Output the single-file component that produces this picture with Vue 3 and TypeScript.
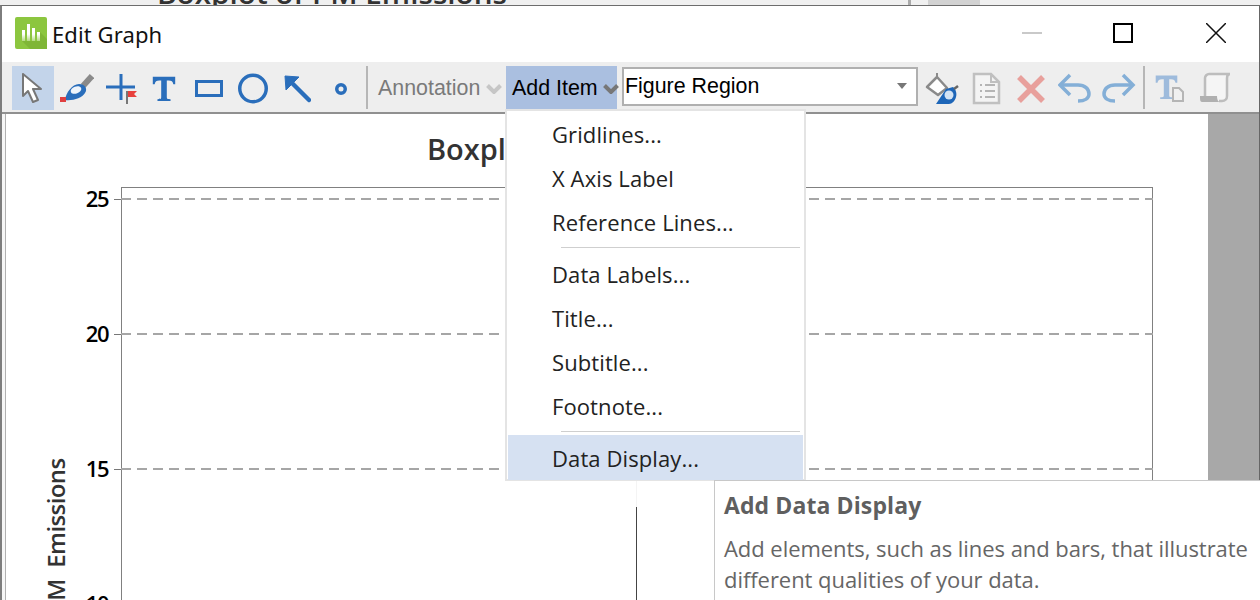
<script setup lang="ts">
const ticks = [
  { label: '25', y: 199 },
  { label: '20', y: 334 },
  { label: '15', y: 469 },
  { label: '10', y: 604 },
]
const groups = [
  ['Gridlines...', 'X Axis Label', 'Reference Lines...'],
  ['Data Labels...', 'Title...', 'Subtitle...', 'Footnote...'],
]
const tPath = 'M3 4H27V12H25C24.500 9 23 8 20 8H18V26C18 28 19 28 22 28V30H8V28C11 28 12 28 12 26V8H10C7 8 5.500 9 5 12H3Z'
</script>

<template>
  <div class="screen">
    <div class="behind">
      <span class="behind-title">Boxplot of PM Emissions</span>
      <i class="behind-tick"></i>
      <i class="behind-thumb"></i>
    </div>
    <div class="window">
      <header class="titlebar">
        <svg class="app-icon" width="32" height="32" viewBox="0 0 32 32">
          <defs>
            <linearGradient id="barFade" x1="0" y1="0" x2="0" y2="1">
              <stop offset="0.6" stop-color="#fff" />
              <stop offset="1" stop-color="#fff" stop-opacity="0.35" />
            </linearGradient>
          </defs>
          <rect width="32" height="32" rx="2" fill="#8cc63f" />
          <path d="M7 24L15 32H32V22L25 15V24z" fill="#7fb636" />
          <path d="M7 13h3v11H7zM12 7h3v17h-3zM17 11h3v13h-3zM22 15h3v9h-3z" fill="url(#barFade)" />
        </svg>
        <span class="title-text">Edit Graph</span>
        <div class="win-controls">
          <svg width="20" height="20" viewBox="0 0 20 20"><path d="M0 10h20" stroke="#c9c9c9" stroke-width="2" /></svg>
          <svg width="20" height="20" viewBox="0 0 20 20"><rect x="1" y="1" width="18" height="18" fill="none" stroke="#000" stroke-width="2" /></svg>
          <svg class="close-x" width="20" height="20" viewBox="0 0 20 20"><path d="M0 0l20 20M20 0L0 20" stroke="#111" stroke-width="1.500" /></svg>
        </div>
      </header>
      <div class="toolbar">
        <button class="tool selected">
          <svg class="soft" width="24" height="32" viewBox="0 0 24 32"><path d="M2 2V24L7 19L12 30L17 28L12 17H20Z" fill="#fff" stroke="#777" stroke-width="2" stroke-linejoin="round" /></svg>
        </button>
        <button class="tool">
          <svg class="soft" width="36" height="32" viewBox="0 0 36 32">
            <path d="M25 14L34 4" stroke="#8a8a8a" stroke-width="6" />
            <path d="M7 28c1-7 7-16 14-16 6 0 9 5 6 9-3 5-12 8-20 7z" fill="#2a6ebb" />
            <ellipse cx="18" cy="18" rx="5.500" ry="3.500" fill="#eef4fb" transform="rotate(-20 18 18)" />
            <rect x="2" y="25" width="6" height="5" fill="#e04040" />
          </svg>
        </button>
        <button class="tool">
          <svg class="soft" width="34" height="32" viewBox="0 0 34 32">
            <path d="M3 15h29M18 2v26" stroke="#2a6ebb" stroke-width="3" fill="none" />
            <path d="M24 19h10l-3 3 3 3h-10z" fill="#e8403c" />
            <path d="M24 19v13" stroke="#777" stroke-width="2" />
          </svg>
        </button>
        <button class="tool">
          <svg class="soft" width="28" height="32" viewBox="0 0 30 32"><path :d="tPath" fill="#2a6ebb" /></svg>
        </button>
        <button class="tool">
          <svg class="soft" width="30" height="32" viewBox="0 0 30 32"><rect x="3.500" y="9.500" width="25" height="14" fill="none" stroke="#2a6ebb" stroke-width="3" /></svg>
        </button>
        <button class="tool">
          <svg class="soft" width="32" height="32" viewBox="0 0 32 32"><circle cx="17" cy="16.500" r="13.250" fill="none" stroke="#2a6ebb" stroke-width="3.500" /></svg>
        </button>
        <button class="tool">
          <svg class="soft" width="30" height="32" viewBox="0 0 30 32"><path d="M8 8L28 28" stroke="#2a6ebb" stroke-width="4.500" stroke-linecap="round" /><path d="M4 4L18 5L5 18Z" fill="#2a6ebb" stroke="#2a6ebb" stroke-linejoin="round" /></svg>
        </button>
        <button class="tool">
          <svg class="soft" width="30" height="32" viewBox="0 0 30 32"><circle cx="16" cy="17" r="4.250" fill="none" stroke="#2a6ebb" stroke-width="3.500" /></svg>
        </button>
        <span class="sep first"></span>
        <div class="menu-label muted">Annotation
          <svg width="16" height="10" viewBox="0 0 16 10"><path d="M1.500 1.500l6.500 6.500 6.500-6.500" fill="none" stroke="#c6c6c6" stroke-width="4" /></svg>
        </div>
        <div class="menu-label active">Add Item
          <svg width="16" height="10" viewBox="0 0 16 10"><path d="M1.500 1.500l6.500 6.500 6.500-6.500" fill="none" stroke="#777" stroke-width="4" /></svg>
        </div>
        <div class="combo">
          <span>Figure Region</span>
          <i class="combo-arrow"></i>
        </div>
        <button class="tool paint">
          <svg class="soft" width="36" height="34" viewBox="0 0 36 34">
            <path d="M4 16L14 6L24 17L15 24Z" fill="#fff" stroke="#8a8a8a" stroke-width="2.500" stroke-linejoin="round" />
            <path d="M14 6V2" stroke="#8a8a8a" stroke-width="2" />
            <path d="M13 33l10-15 7-2c3 2 4 7 3 10-1 4-4 7-7 7z" fill="#1e66b8" />
            <circle cx="26" cy="24" r="4.500" fill="#d3e3f4" />
            <path d="M31 18l4-3" stroke="#666" stroke-width="2.500" />
          </svg>
        </button>
        <button class="tool gap">
          <svg class="soft" width="30" height="34" viewBox="0 0 30 34">
            <path d="M2 3H19L27 11V32H2Z" fill="#f4f4f4" stroke="#c0c0c0" stroke-width="2.500" />
            <path d="M19 3V11H27" fill="none" stroke="#c0c0c0" stroke-width="2" />
            <path d="M8 14h2M13 14h10M8 20h2M13 20h10M8 26h2M13 26h10" stroke="#b5b5b5" stroke-width="2" />
          </svg>
        </button>
        <button class="tool">
          <svg class="soft" width="32" height="34" viewBox="0 0 32 34"><path d="M4 6L28 30M28 6L4 30" stroke="#e8a09c" stroke-width="5.500" /></svg>
        </button>
        <button class="tool">
          <svg class="soft" width="34" height="34" viewBox="0 0 34 34"><path d="M3 14H20C27 14 31 18 31 23C31 27 27 30 20 30" fill="none" stroke="#84afd7" stroke-width="3.500" /><path d="M12 4L2 14L12 24" fill="none" stroke="#84afd7" stroke-width="3.500" /></svg>
        </button>
        <button class="tool">
          <svg class="soft" width="34" height="34" viewBox="0 0 34 34"><path d="M31 14H13C6 14 2 18 2 23C2 27 6 30 13 30" fill="none" stroke="#84afd7" stroke-width="3.500" /><path d="M21 4L31 14L21 24" fill="none" stroke="#84afd7" stroke-width="3.500" /></svg>
        </button>
        <span class="sep second"></span>
        <button class="tool">
          <svg class="soft" width="32" height="34" viewBox="0 0 32 34">
            <path :d="tPath" fill="#9ebbdc" transform="translate(-1 1) scale(0.9)" />
            <path d="M19 17h6l4 4v9H19z" fill="#f0f0f0" stroke="#b5b5b5" stroke-width="2" />
          </svg>
        </button>
        <button class="tool">
          <svg class="soft" width="34" height="34" viewBox="0 0 34 34">
            <path d="M8 26V7c0-2 2-4 4-4H33c-2 0-3 2-3 4V25c0 3-2 5-5 5H22" fill="#f5f5f5" stroke="#bdbdbd" stroke-width="2.500" />
            <path d="M3 25H20c0 3 1 6 3 6H5c-2 0-2-3-2-6z" fill="#b0b0b0" />
          </svg>
        </button>
      </div>
      <main class="workspace">
        <section class="figure">
          <h1 class="chart-title">Boxplot of PM Emissions</h1>
          <div class="plot">
            <div class="mid-faint"></div>
            <div class="mid-line"></div>
          </div>
          <div v-for="t in ticks" :key="t.label" class="tick" :style="{ top: t.y - 115 + 'px' }">
            <span class="tick-label">{{ t.label }}</span>
            <span class="tick-mark"></span>
            <span class="tick-dash"></span>
          </div>
          <div class="y-title">PM Emissions</div>
        </section>
        <aside class="scroll-gutter"></aside>
      </main>
    </div>

    <nav class="dropdown">
      <template v-for="(items, i) in groups" :key="i">
        <div v-for="item in items" :key="item" class="menu-item">{{ item }}</div>
        <div class="menu-rule"></div>
      </template>
      <div class="menu-item hot">Data Display...</div>
    </nav>

    <div class="tip">
      <strong class="tip-title">Add Data Display</strong>
      <p class="tip-body">Add elements, such as lines and bars, that illustrate different qualities of your data.</p>
    </div>
  </div>
</template>

<style>
html, body { margin: 0; background: #fff; overflow: hidden; }
</style>

<style scoped>
.screen { position: relative; width: 1260px; height: 600px; overflow: hidden; background: #f1f1f1; font-family: "Open Sans", "Noto Sans", sans-serif; }
.behind { position: relative; height: 5px; overflow: hidden; background: #f0f0f0; padding-left: 157px; }
.behind-title { display: block; margin-top: -22px; font-size: 29.7px; font-weight: 600; line-height: 30px; color: #333; white-space: nowrap; }
.behind-tick { position: absolute; left: 908px; top: 0; width: 3px; height: 5px; background: #aaa; }
.behind-thumb { position: absolute; left: 928px; top: 0; width: 52px; height: 5px; background: #d2d2d2; }
.window { height: 595px; border-top: 1px solid #6d6d6d; border-left: 2px solid #7d7d7d; border-right: 1px solid #666; box-sizing: border-box; background: #f6f6f6; display: flex; flex-direction: column; }
.titlebar { height: 56px; display: flex; align-items: center; padding: 0 33px 2px 13px; background: #fff; box-sizing: border-box; flex: none; }
.app-icon { flex: none; }
.title-text { margin: 2px 0 0 5px; font: 22px "Noto Sans", "Open Sans", sans-serif; letter-spacing: 0.1px; color: #111; }
.win-controls { margin-left: auto; display: flex; gap: 71px; }
.close-x { margin-left: 2px; }
.soft { filter: blur(0.35px); }
.toolbar { height: 52px; flex: none; background: #eeeeee; display: flex; align-items: flex-start; box-sizing: border-box; padding: 4px 0 0 10px; border-bottom: 2px solid #909090; }
.tool { all: unset; display: flex; align-items: center; justify-content: center; flex: none; width: 44px; height: 44px; box-sizing: border-box; }
.tool.selected { width: 42px; background: #c3d4ea; }
.tool.paint { margin-left: 1px; }
.tool.gap { margin-left: 2px; }
.sep { flex: none; width: 2px; height: 43px; background: #b6b6b6; }
.sep.first { margin: 0 10px 0 4px; }
.sep.second { margin: 0 3px 0 2px; }
.menu-label { flex: none; height: 43px; display: flex; align-items: center; gap: 6px; padding-top: 2px; font: 21.4px "Liberation Sans", Arial, sans-serif; white-space: nowrap; box-sizing: border-box; }
.menu-label svg { flex: none; }
.menu-label.muted { color: #7a7a7a; width: 128px; }
.menu-label.active { color: #000; background: #aabfe0; width: 111px; padding-left: 6px; gap: 5px; }
.combo { flex: none; width: 296px; height: 39px; margin: 1px 0 0 5px; display: flex; align-items: center; border: 2px solid #b0b0b0; background: #fff; box-sizing: border-box; padding: 0 9px 1px 1px; justify-content: space-between; font: 21.4px "Liberation Sans", Arial, sans-serif; color: #000; }
.combo-arrow { width: 0; height: 0; border: 5px solid transparent; border-top: 6px solid #777; border-bottom: 0; }
.workspace { flex: 1; display: flex; min-height: 0; margin-left: 3px; border-left: 1px solid #b0b0b0; }
.figure { position: relative; flex: 1; background: #fff; overflow: hidden; }
.scroll-gutter { width: 51px; flex: none; background: #a8a8a8; }
.chart-title { margin: 0; padding-top: 15px; padding-left: 421px; height: 58px; box-sizing: border-box; font-size: 29px; line-height: 40px; font-weight: 600; color: #333; white-space: nowrap; }
.plot { position: absolute; left: 115px; top: 73px; width: 1032px; height: 560px; box-sizing: border-box; border: 1px solid #808080; }
.mid-faint { position: absolute; left: 514px; top: 292px; height: 27px; width: 1px; background: #f4f4f4; }
.mid-line { position: absolute; left: 514px; top: 319px; height: 200px; width: 1px; background: #444; }
.tick { position: absolute; left: 0; width: 1147px; height: 2px; }
.tick-label { position: absolute; left: 0; width: 102px; text-align: right; font-size: 22px; font-weight: 600; letter-spacing: -1.500px; color: #000; line-height: 22px; top: -11px; }
.tick-mark { position: absolute; left: 108px; top: 1px; width: 7px; height: 1px; background: #777; }
.tick-dash { position: absolute; left: 115px; right: 0; top: 0; height: 2px; background: repeating-linear-gradient(90deg, #a6a6a6 0 10px, transparent 10px 16px); }
.y-title { position: absolute; left: 33px; top: 501px; transform: rotate(-90deg); transform-origin: left top; font-size: 24px; font-weight: 600; letter-spacing: -0.600px; word-spacing: 6px; color: #333; white-space: nowrap; }
.dropdown { position: absolute; left: 505px; top: 109px; width: 301px; height: 372px; box-sizing: border-box; background: #fff; border: 2px solid #e4e4e4; padding-top: 1px; }
.menu-item { height: 44px; line-height: 44px; padding-left: 45px; font-size: 22px; letter-spacing: 0.1px; color: #222; white-space: nowrap; }
.menu-rule { height: 1px; background: #cfcfcf; margin: 3px 4px 4px 54px; }
.menu-item.hot { box-sizing: border-box; background: #d6e1f2; height: 45px; margin: -1px 1px 0; padding: 1px 0 0 44px; }
.tip { position: absolute; left: 714px; top: 480px; width: 546px; height: 120px; box-sizing: border-box; background: #fff; border-left: 1px solid #c8c8c8; border-top: 1px solid #c8c8c8; padding: 8px 9px; color: #666; }
.tip-title { display: block; font-size: 23px; line-height: 32px; font-weight: 700; letter-spacing: 0.1px; color: #5f5f5f; }
.tip-body { margin: 12px 0 0; font-size: 22px; line-height: 31px; letter-spacing: -0.05px; width: 530px; }
</style>
